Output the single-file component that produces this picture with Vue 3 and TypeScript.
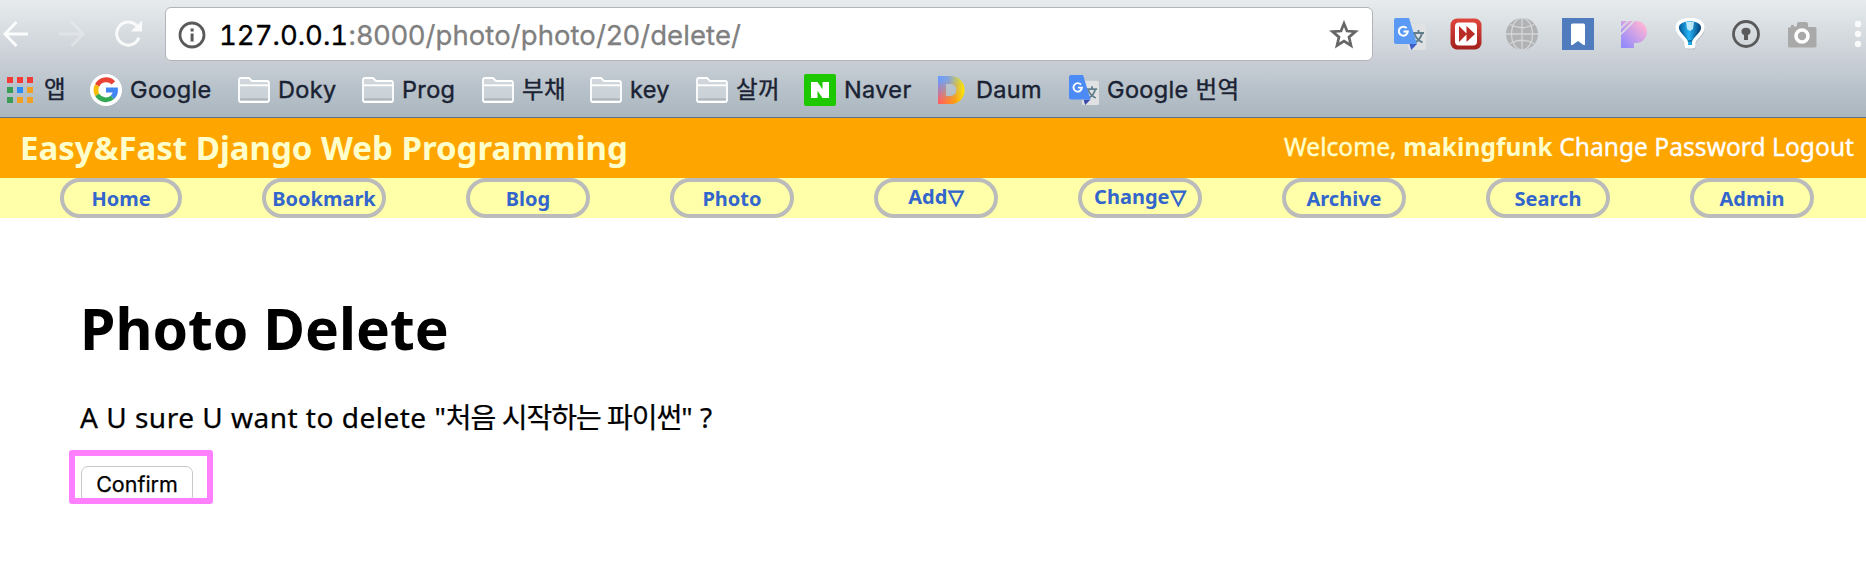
<script setup lang="ts">
interface Bookmark {
  label: string
  icon: 'apps' | 'google' | 'folder' | 'naver' | 'daum' | 'translate'
}

interface NavItem {
  label: string
  dropdown?: boolean
}

const bookmarks: Bookmark[] = [
  { label: '앱', icon: 'apps' },
  { label: 'Google', icon: 'google' },
  { label: 'Doky', icon: 'folder' },
  { label: 'Prog', icon: 'folder' },
  { label: '부채', icon: 'folder' },
  { label: 'key', icon: 'folder' },
  { label: '살꺼', icon: 'folder' },
  { label: 'Naver', icon: 'naver' },
  { label: 'Daum', icon: 'daum' },
  { label: 'Google 번역', icon: 'translate' },
]

const appColors = ['#f53b37', '#f53b37', '#f53b37', '#3a9c55', '#2a8df5', '#f2a124', '#3a9c55', '#f2a124', '#f2a124']

const navItems: NavItem[] = [
  { label: 'Home' },
  { label: 'Bookmark' },
  { label: 'Blog' },
  { label: 'Photo' },
  { label: 'Add', dropdown: true },
  { label: 'Change', dropdown: true },
  { label: 'Archive' },
  { label: 'Search' },
  { label: 'Admin' },
]
</script>

<template>
  <div class="page">
    <div class="browser">
      <div class="toolbar">
        <svg class="ctl" width="26" height="28" viewBox="0 0 26 28">
          <path d="M25 14H2.500M13.500 2 2 14l11.500 12" fill="none" stroke="#fff" stroke-width="3" opacity=".9" />
        </svg>
        <svg class="ctl" width="26" height="28" viewBox="0 0 26 28">
          <path d="M0 14h23.500M12.500 2 24 14 12.500 26" fill="none" stroke="#fff" stroke-width="3" opacity=".25" />
        </svg>
        <svg class="ctl" width="27" height="28" viewBox="0 0 27 28">
          <g opacity=".85">
            <path d="M22 6.200A11.500 11.500 0 1 0 24 17.500" fill="none" stroke="#fff" stroke-width="3" />
            <path d="M27 .5v11H16z" fill="#fff" />
          </g>
        </svg>
        <div class="address">
          <svg width="28" height="28" viewBox="0 0 28 28">
            <circle cx="14" cy="14" r="12" fill="none" stroke="#5a5a5a" stroke-width="2.800" />
            <path d="M12.600 7.500h3v3h-3zM12.600 12.500h3v8h-3z" fill="#5a5a5a" />
          </svg>
          <span class="url"><span class="host">127.0.0.1</span>:8000/photo/photo/20/delete/</span>
          <svg class="star" width="30" height="29" viewBox="0 0 30 29">
            <path d="M15 3.500 18 11l8.500.6-6.500 5.500 2 8.400-7-4.500-7 4.500 2-8.400-6.500-5.500L12 11z" fill="none" stroke="#666" stroke-width="2.700" />
          </svg>
        </div>
        <div class="extensions">
          <svg width="32" height="32" viewBox="0 0 32 32">
            <rect x="14" y="6" width="18" height="26" rx="2" fill="#e0e1e3" />
            <path d="M19 15h11M24.500 12v3M28 15c-1 5-4 8-7.500 10M20.500 16c1 3 4 6.500 8 8.500" fill="none" stroke="#607d8b" stroke-width="1.900" />
            <path d="M15.500 26H23l-5.800 6z" fill="#3f5fc6" />
            <path d="M2 0h13l8 26H2a2 2 0 0 1-2-2V2a2 2 0 0 1 2-2z" fill="#5a9af5" />
            <path d="M12.700 10.200a4.500 4.500 0 1 0 1.100 3.300H9.500" fill="none" stroke="#fff" stroke-width="2" />
          </svg>
          <svg width="32" height="32" viewBox="0 0 32 32">
            <defs>
              <linearGradient id="red" x2="0" y2="1"><stop stop-color="#e0473d" /><stop offset="1" stop-color="#a3201d" /></linearGradient>
            </defs>
            <rect x=".5" y=".5" width="31" height="31" rx="6.500" fill="url(#red)" />
            <rect x="5" y="4.500" width="22" height="23" rx="4" fill="#fff" />
            <path d="M9 8 17 16l-8 8zM16.500 8 25 16l-8.500 8z" fill="#bb2b25" />
          </svg>
          <svg width="32" height="32" viewBox="0 0 32 32">
            <circle cx="16" cy="16" r="16" fill="#b1b2b4" />
            <g fill="none" stroke="#d4d6d9" stroke-width="1.300">
              <path d="M0 16h32M16 0v32M4 6.500Q16 13 28 6.500M4 25.500Q16 19 28 25.500" />
              <ellipse cx="16" cy="16" rx="10.500" ry="16" />
            </g>
          </svg>
          <svg width="32" height="32" viewBox="0 0 32 32">
            <path d="M0 0h32v32H0z" fill="#507cbe" />
            <path d="M10.500 5.500h11a1.500 1.500 0 0 1 1.500 1.500v20h-1.500L16 23l-5.500 4H9V7a1.500 1.500 0 0 1 1.500-1.500z" fill="#fff" />
          </svg>
          <svg width="32" height="32" viewBox="0 0 32 32">
            <defs>
              <linearGradient id="pink" x1="1" y1="0" x2="0" y2="1"><stop offset=".15" stop-color="#fbb2d7" /><stop offset=".9" stop-color="#958cfb" /></linearGradient>
            </defs>
            <path d="M3 3h15a11 11 0 0 1 0 22h-2v5H3z" fill="url(#pink)" />
            <path d="M2.500 10.500 10.500 2.500M2.500 16.500 16.500 2.500" stroke="#dbe0e5" stroke-width="1.600" />
          </svg>
          <svg width="32" height="32" viewBox="0 0 32 32">
            <defs>
              <linearGradient id="blue" x2="1" y2="0"><stop stop-color="#035b9e" /><stop offset=".45" stop-color="#27b5f5" /><stop offset="1" stop-color="#023e76" /></linearGradient>
            </defs>
            <path d="M5 11C4 0 28 0 27 11c0 5-8 9-9 14v3h-4v-3C13 20 5 16 5 11z" transform="translate(1 1)" fill="#8b929a" stroke="#8b929a" stroke-width="5" stroke-linejoin="round" opacity=".35" />
            <path d="M5 10C4 1 28 1 27 10c0 5-8 9-9 14v3h-4v-3C13 19 5 15 5 10z" fill="url(#blue)" stroke="#fff" stroke-width="7" stroke-linejoin="round" paint-order="stroke" />
            <path d="M12 4h8l-1 7-3 2-3-2z" fill="#e3f6ff" opacity=".8" />
            <path d="M5 9c1 6 8 9 9.500 15h3C19 18 26 15 27 9c-3 5-7 8-9 13h-4C12 17 8 14 5 9z" fill="#03324f" opacity=".45" />
          </svg>
          <svg width="32" height="32" viewBox="0 0 32 32">
            <circle cx="16" cy="16" r="12.500" fill="none" stroke="#5a5a5a" stroke-width="2.800" />
            <ellipse cx="16" cy="13.500" rx="4.500" ry="3.700" fill="#5a5a5a" />
            <path d="M14 15h4v7h-4z" fill="#5a5a5a" />
          </svg>
          <svg width="32" height="32" viewBox="0 0 32 32">
            <path d="M11 8V6q0-2 2-2h7q2 0 2 2v3h7q1.500 0 1.500 1.500V28q0 1.500-1.500 1.500H3.500Q2 29.500 2 28V10.500Q2 9 5 9V7h3v2z" fill="#a9a9a9" />
            <circle cx="16" cy="18" r="6" fill="#a9a9a9" stroke="#fff" stroke-width="3.600" />
          </svg>
        </div>
        <svg class="menu" width="8" height="28" viewBox="0 0 8 28">
          <g fill="#fff" opacity=".85"><circle cx="4" cy="4" r="3.200" /><circle cx="4" cy="14" r="3.200" /><circle cx="4" cy="24" r="3.200" /></g>
        </svg>
      </div>

      <div class="bookmarks">
        <div v-for="b in bookmarks" :key="b.label" class="bookmark" :class="b.icon">
          <svg v-if="b.icon === 'apps'" width="26" height="26" viewBox="0 0 26 26">
            <rect v-for="(c, i) in appColors" :key="i" :x="(i % 3) * 10" :y="Math.floor(i / 3) * 10" width="6" height="6" :fill="c" />
          </svg>
          <svg v-else-if="b.icon === 'google'" width="32" height="32" viewBox="0 0 32 32">
            <circle cx="16" cy="16" r="16" fill="#fff" />
            <g fill="none" stroke-width="4.800">
              <path d="M23.400 8.800A10 10 0 0 0 7.200 11.400" stroke="#ea4335" />
              <path d="M7.200 11.400a10 10 0 0 0 0 9.500" stroke="#fbbc05" />
              <path d="M7.200 20.900A10 10 0 0 0 22.500 23.300" stroke="#34a853" />
              <path d="M22.500 23.300A9.600 9.600 0 0 0 25.500 16H16" stroke="#4285f4" />
            </g>
          </svg>
          <svg v-else-if="b.icon === 'folder'" width="32" height="26" viewBox="0 0 32 26">
            <path d="M1 3q0-2 2-2h8l3 3h15q2 0 2 2v17q0 2-2 2H3q-2 0-2-2z" fill="#fff" fill-opacity=".3" stroke="#fff" stroke-width="1.800" />
            <path d="M1 8.300h30" stroke="#fff" stroke-width="1.800" />
            <path d="M2 22.200h28" stroke="#adb3bb" stroke-width="1.600" />
          </svg>
          <svg v-else-if="b.icon === 'naver'" width="32" height="32" viewBox="0 0 32 32">
            <rect width="32" height="32" rx="2" fill="#1ec800" />
            <path d="M7 8h6.500l5 7.300V8H25v16h-6.500l-5-7.300V24H7z" fill="#fff" />
          </svg>
          <svg v-else-if="b.icon === 'daum'" width="27" height="28" viewBox="0 0 27 28">
            <defs>
              <linearGradient id="d1" x2="1" y2="0"><stop stop-color="#6b9bff" /><stop offset=".4" stop-color="#84a5dc" /><stop offset="1" stop-color="#ffe500" /></linearGradient>
              <linearGradient id="d2" x2="1" y2="0"><stop stop-color="#ff5d66" /><stop offset=".65" stop-color="#ff9d10" /><stop offset="1" stop-color="#ffe500" /></linearGradient>
              <linearGradient id="d3" x2="0" y2="1"><stop offset=".15" stop-color="#000" /><stop offset=".9" stop-color="#fff" /></linearGradient>
              <mask id="dm"><path d="M0 0h27v28H0z" fill="url(#d3)" /></mask>
            </defs>
            <path fill-rule="evenodd" d="M0 0h13a13.500 14 0 0 1 0 28H0zM8 8v12h4.500a6 6 0 0 0 0-12z" fill="url(#d1)" />
            <path fill-rule="evenodd" d="M0 0h13a13.500 14 0 0 1 0 28H0zM8 8v12h4.500a6 6 0 0 0 0-12z" fill="url(#d2)" mask="url(#dm)" />
          </svg>
          <svg v-else width="30" height="30" viewBox="0 0 32 32">
            <rect x="14" y="6" width="18" height="26" rx="2" fill="#e0e1e3" />
            <path d="M19 15h11M24.500 12v3M28 15c-1 5-4 8-7.500 10M20.500 16c1 3 4 6.500 8 8.500" fill="none" stroke="#607d8b" stroke-width="1.900" />
            <path d="M15.500 26H23l-5.800 6z" fill="#3949ab" />
            <path d="M2 0h13l8 26H2a2 2 0 0 1-2-2V2a2 2 0 0 1 2-2z" fill="#4c8bf5" />
            <path d="M12.700 10.200a4.500 4.500 0 1 0 1.100 3.300H9.500" fill="none" stroke="#fff" stroke-width="2" />
          </svg>
          <span>{{ b.label }}</span>
        </div>
      </div>
    </div>

    <header class="header">
      <h2>Easy&amp;Fast Django Web Programming</h2>
      <div class="user">Welcome, <strong>makingfunk</strong> <a>Change Password</a> <a>Logout</a></div>
    </header>

    <nav class="nav">
      <a v-for="item in navItems" :key="item.label" class="pill" :class="{ dropdown: item.dropdown }">
        <span>{{ item.label }}<span v-if="item.dropdown" class="tri">▽</span></span>
      </a>
    </nav>

    <main class="main">
      <h1>Photo Delete</h1>
      <p><span class="lead">A U sure U want to delete </span>"<span class="ko">처음 시작하는 파이썬</span>" ?</p>
      <div class="action">
        <button type="button">Confirm</button>
        <div class="highlight"></div>
      </div>
    </main>
  </div>
</template>

<style>
body {
  margin: 0;
  background: #fff;
}
</style>

<style scoped>
.page {
  height: 578px;
  overflow: hidden;
  font-family: "Noto Sans", "Noto Sans CJK KR", sans-serif;
  color: #000;
  white-space: nowrap;
}
svg {
  display: block;
  flex: none;
}
.browser {
  height: 117px;
  border-bottom: 1px solid #5d7088;
  background: linear-gradient(#e7ebee 0, #d9dee2 28px, #c9ced6 62px, #b8c2ca 88px, #aab6be 117px);
  font-family: Inter, "Noto Sans CJK KR", sans-serif;
}
.toolbar {
  display: flex;
  align-items: center;
  height: 68px;
  padding-left: 3px;
}
.ctl {
  margin-right: 30px;
}
.ctl:nth-child(3) {
  margin-right: 23px;
}
.address {
  box-sizing: border-box;
  display: flex;
  align-items: center;
  width: 1208px;
  height: 54px;
  padding: 1px 13px 0 12px;
  border: 1px solid #b1b4b8;
  border-radius: 6px;
  background: #fff;
}
.url {
  flex: 1;
  margin-left: 13px;
  color: #808080;
  font-size: 27.5px;
  line-height: 40px;
  letter-spacing: 0.08px;
  -webkit-text-stroke: 0.3px;
}
.host {
  color: #000;
  font-variant-numeric: tabular-nums;
  letter-spacing: 0;
}
.extensions {
  display: flex;
  gap: 24px;
  margin-left: 21px;
}
.menu {
  margin-left: 36px;
}
.bookmarks {
  display: grid;
  grid-template-columns: 83px 148px 124px 120px 108px 106px 108px 134px 131px 1fr;
  height: 43px;
  padding-left: 7px;
  color: #1a2233;
  font-size: 23.5px;
  letter-spacing: 0.35px;
  -webkit-text-stroke: 0.4px;
}
.bookmark {
  display: flex;
  align-items: center;
  gap: 8px;
  line-height: 43px;
}
.apps,
.daum {
  gap: 11px;
}
.header {
  display: flex;
  justify-content: space-between;
  align-items: center;
  height: 60px;
  padding: 0 12px 0 20px;
  background: #ffa500;
  color: #ffc;
}
.header h2 {
  margin: 0;
  font-size: 33px;
  line-height: 58px;
}
.user {
  padding-bottom: 3px;
  font-size: 24.5px;
  line-height: 50px;
  letter-spacing: 0.06px;
  -webkit-text-stroke: 0.4px;
}
.user strong {
  -webkit-text-stroke: 0;
}
.user a {
  color: #fff;
}
.nav {
  display: flex;
  gap: 80px;
  height: 40px;
  padding-left: 60px;
  background: #ffa;
}
.pill {
  box-sizing: border-box;
  flex: none;
  width: 124px;
  height: 40px;
  border: 4px solid #bbb;
  border-radius: 24px;
  color: #36c;
  font-size: 20px;
  font-weight: 700;
  line-height: 33px;
  text-align: center;
}
.pill:first-child {
  width: 122px;
}
.pill.dropdown {
  line-height: 29px;
}
.pill > span {
  display: inline-block;
  margin: 0 -6px;
}
.tri {
  margin-left: 1px;
  font-family: "DejaVu Sans", sans-serif;
  font-size: 20px;
  line-height: 1;
  -webkit-text-stroke: 1.1px;
}
.main {
  padding: 80px 0 0 80px;
}
.main h1 {
  margin: 0;
  font-size: 57px;
  line-height: 60px;
}
.main p {
  margin: 39px 0 29px;
  font-size: 28px;
  line-height: 40px;
  -webkit-text-stroke: 0.25px;
}
.lead {
  letter-spacing: 0.5px;
}
.ko {
  letter-spacing: -1px;
}
.action {
  position: relative;
  width: 114px;
}
.action button {
  display: block;
  width: 112px;
  height: 37px;
  margin-left: 1px;
  padding: 0;
  border: 1px solid #c8c8c8;
  border-radius: 7px;
  background: #fff;
  color: #000;
  font: 21.5px/35px Inter, sans-serif;
  -webkit-text-stroke: 0.25px;
}
.highlight {
  position: absolute;
  left: -11px;
  top: -16px;
  box-sizing: border-box;
  width: 144px;
  height: 54px;
  border: 6px solid #ff80ff;
  border-radius: 3px;
}
</style>
